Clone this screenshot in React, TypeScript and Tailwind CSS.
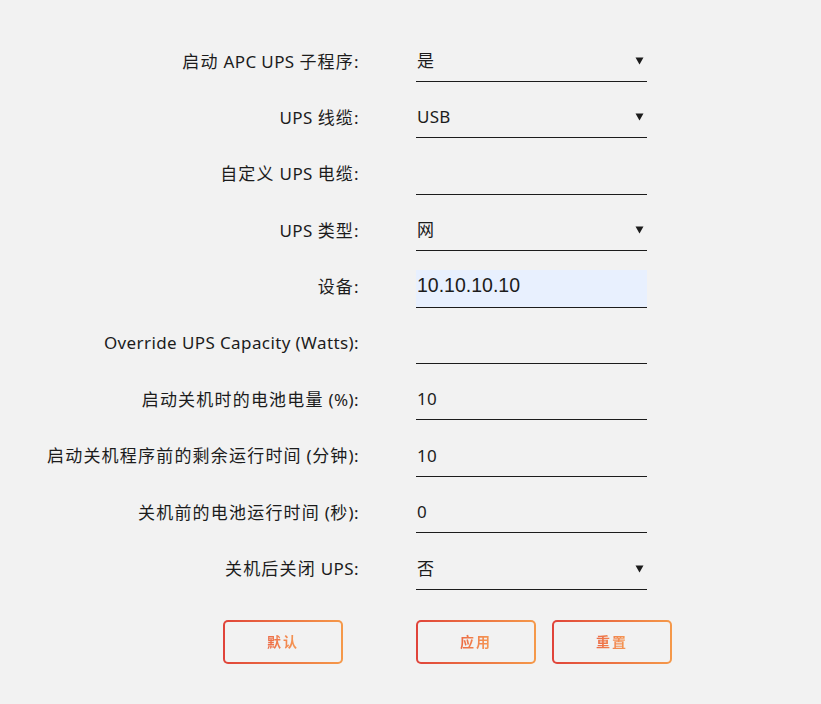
import React from "react";

type Field = {
  label: string;
  value: string;
  kind: "select" | "text";
  autofill?: boolean;
};

const fields: Field[] = [
  { label: "启动 APC UPS 子程序:", value: "是", kind: "select" },
  { label: "UPS 线缆:", value: "USB", kind: "select" },
  { label: "自定义 UPS 电缆:", value: "", kind: "text" },
  { label: "UPS 类型:", value: "网", kind: "select" },
  { label: "设备:", value: "10.10.10.10", kind: "text", autofill: true },
  { label: "Override UPS Capacity (Watts):", value: "", kind: "text" },
  { label: "启动关机时的电池电量 (%):", value: "10", kind: "text" },
  { label: "启动关机程序前的剩余运行时间 (分钟):", value: "10", kind: "text" },
  { label: "关机前的电池运行时间 (秒):", value: "0", kind: "text" },
  { label: "关机后关闭 UPS:", value: "否", kind: "select" },
];

const font = {
  fontFamily: '"Noto Sans", "Noto Sans CJK SC", sans-serif',
};

// Han characters get a little more room than Latin text.
function Label({ text }: { text: string }) {
  const parts = text.split(/([\u4e00-\u9fff]+)/).filter(Boolean);
  return (
    <>
      {parts.map((p, i) =>
        /[\u4e00-\u9fff]/.test(p) ? (
          <span key={i} className="tracking-[1.2px]">
            {p}
          </span>
        ) : (
          <span key={i}>{p}</span>
        )
      )}
    </>
  );
}

function Arrow() {
  return (
    <svg width="9" height="9" viewBox="0 0 9 9" className="shrink-0">
      <path d="M0.5 1.5 H8.5 L4.5 8.5 Z" fill="#1c1c1c" />
    </svg>
  );
}

function GradientButton({ label }: { label: string }) {
  return (
    <div className="w-[120px] h-[44px] rounded-[5px] p-[2px] bg-gradient-to-r from-[#e0433a] to-[#f5994a]">
      <div className="w-full h-full rounded-[3px] bg-[#f2f2f2] flex items-center justify-center">
        <span
          className="text-[14px] font-bold tracking-[2px] bg-gradient-to-r from-[#ec6a45] to-[#f59a55] bg-clip-text text-transparent"
          style={font}
        >
          {label}
        </span>
      </div>
    </div>
  );
}

export default function App() {
  return (
    <div className="min-h-[704px] w-full bg-[#f2f2f2] text-[#1c1c1c]" style={font}>
      <div className="pt-[44px] flex flex-col gap-y-[18.4px]">
        {fields.map((f) => (
          <div key={f.label} className="flex items-center h-[38px]">
            <div className="w-[360px] text-right text-[17px] tracking-[0.4px] leading-none pr-[1px] mb-[4px]">
              <Label text={f.label} />
            </div>
            <div
              className={`ml-[56px] w-[231px] h-[38px] border-b border-[#1c1c1c] flex items-center justify-between pl-[1px] pr-[3px] pb-[4px] ${
                f.autofill ? "bg-[#e8f0fe]" : ""
              }`}
            >
              <span
                className="text-[17px] tracking-[0.3px] leading-none"
                style={
                  f.autofill
                    ? { fontFamily: '"Liberation Sans", Arial, sans-serif', fontSize: "19.5px", letterSpacing: 0 }
                    : undefined
                }
              >
                {f.value}
              </span>
              {f.kind === "select" && <Arrow />}
            </div>
          </div>
        ))}
      </div>
      <div className="flex mt-[30px]">
        <div className="ml-[223px]">
          <GradientButton label="默认" />
        </div>
        <div className="ml-[73px] flex gap-[16px]">
          <GradientButton label="应用" />
          <GradientButton label="重置" />
        </div>
      </div>
    </div>
  );
}
